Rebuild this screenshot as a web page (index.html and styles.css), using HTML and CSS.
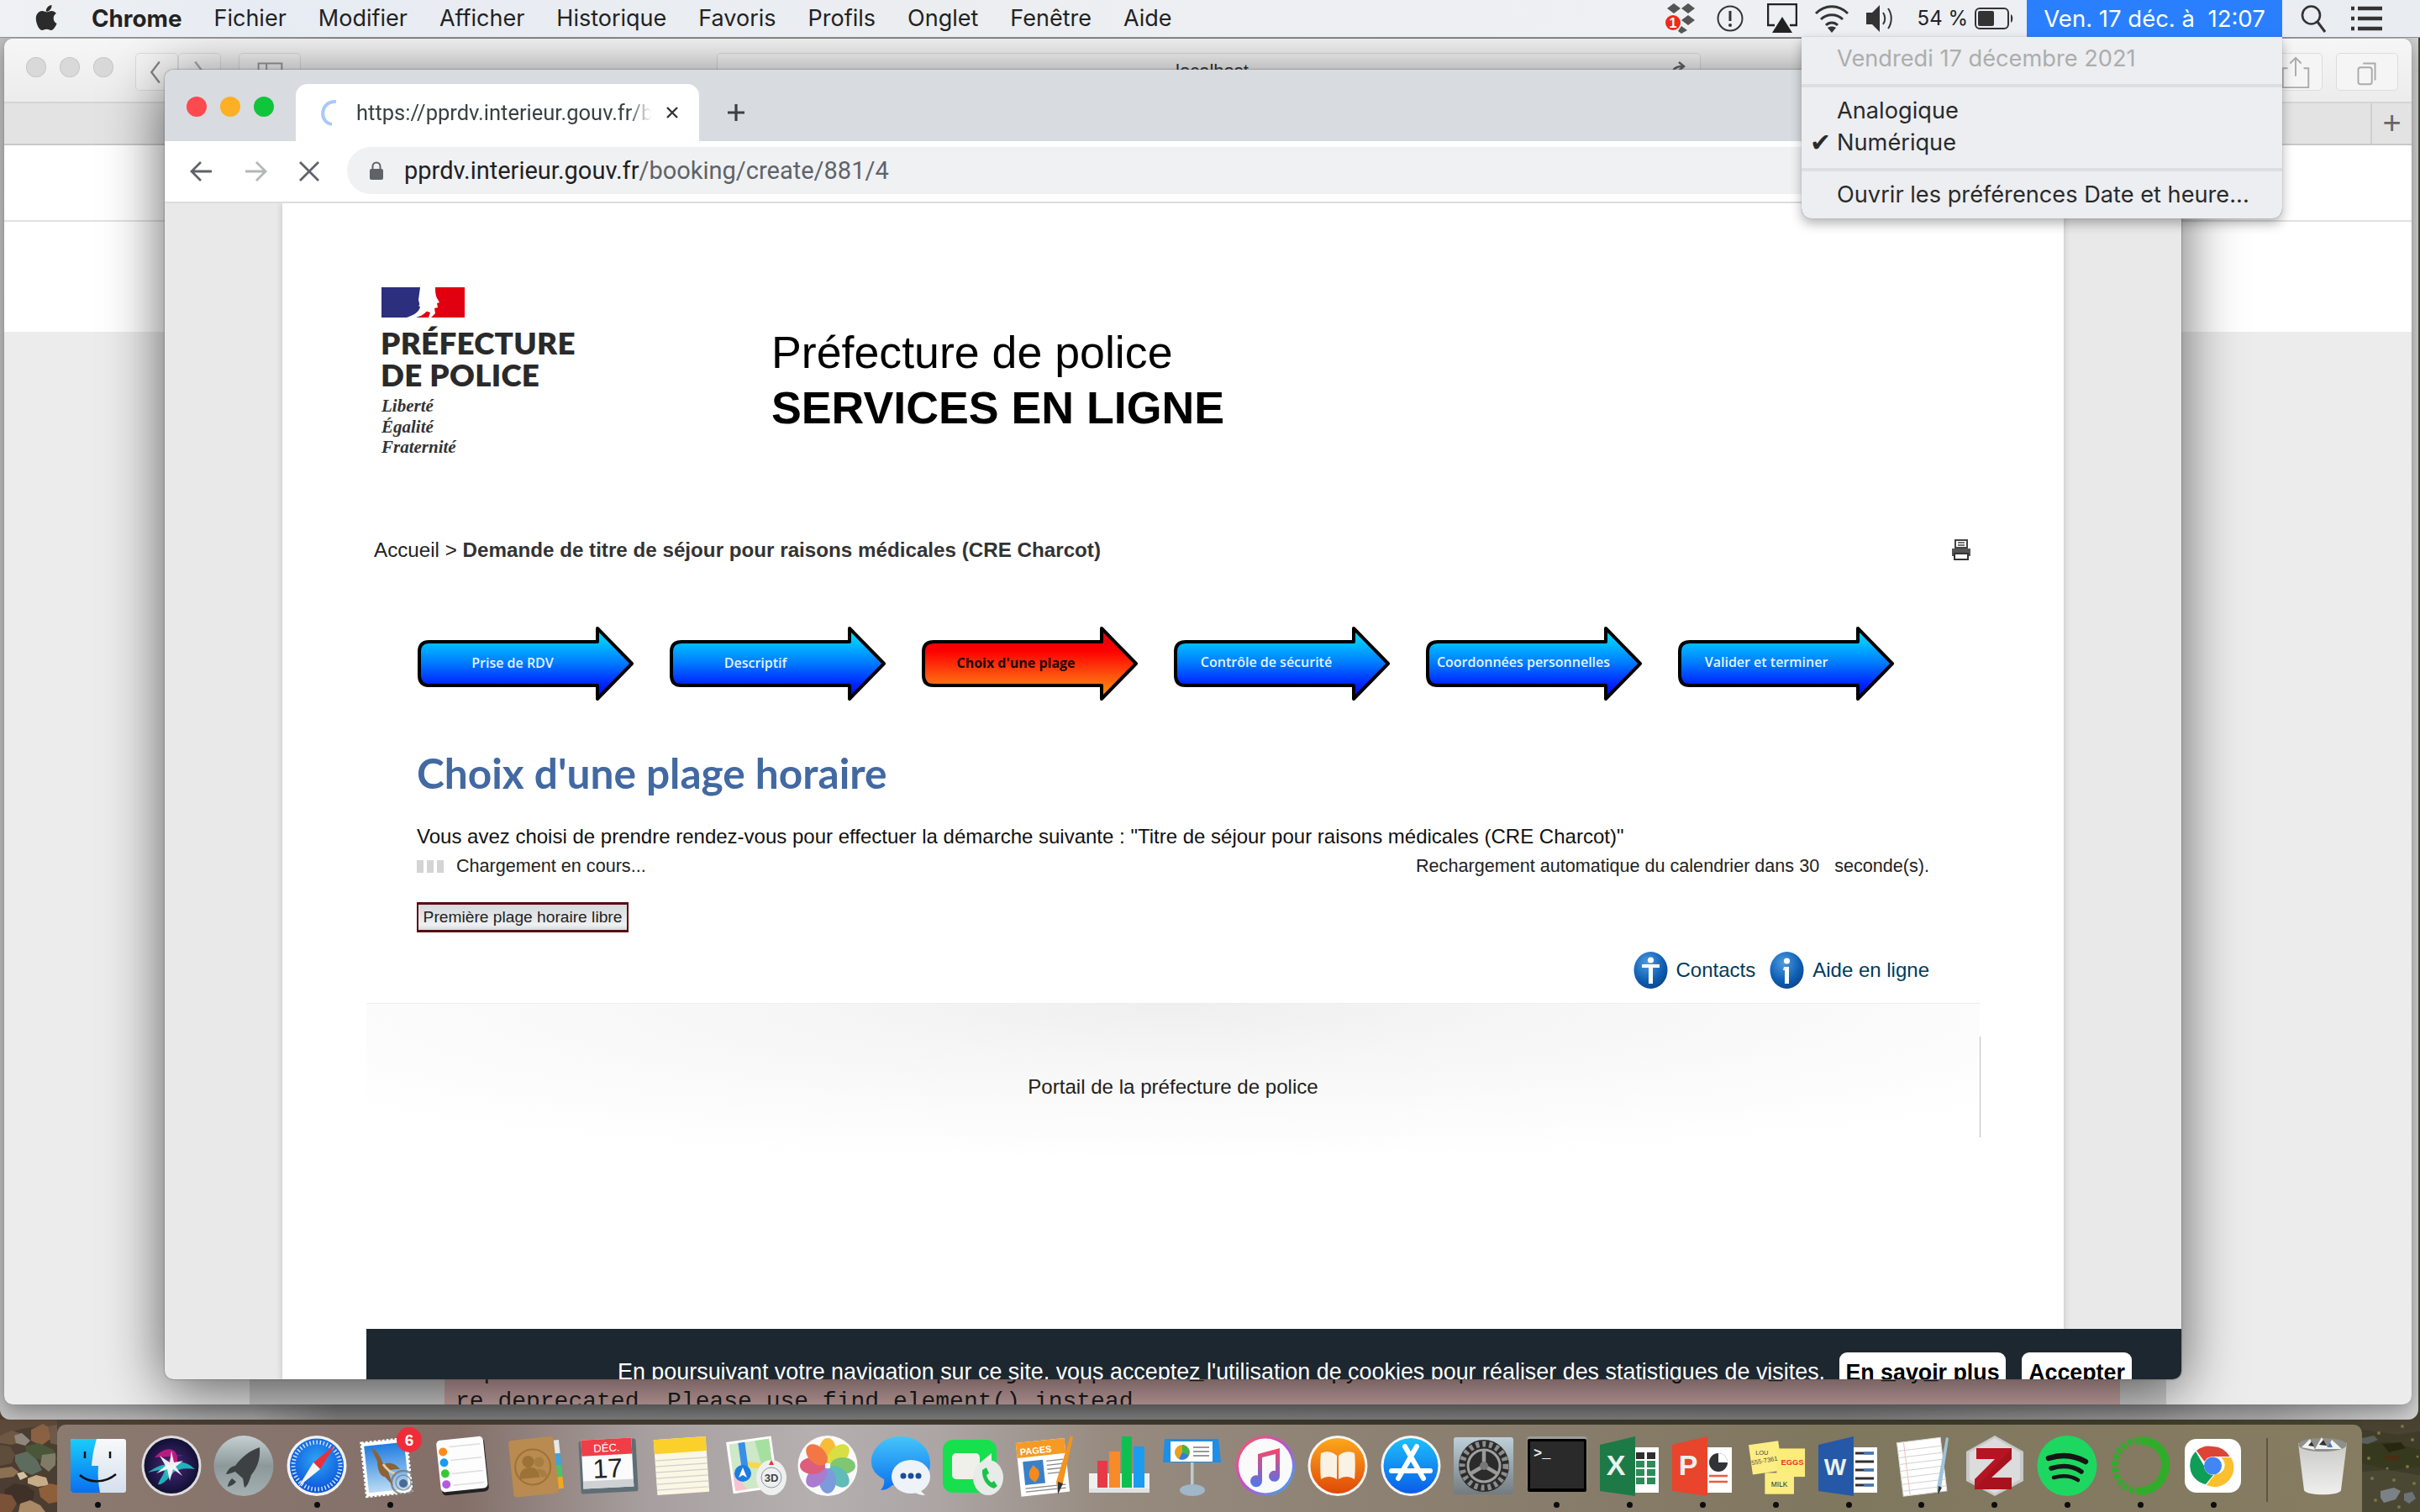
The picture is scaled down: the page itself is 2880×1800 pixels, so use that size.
FILE: index.html
```html
<!DOCTYPE html>
<html lang="fr">
<head>
<meta charset="utf-8">
<title>Préfecture de police</title>
<link rel="stylesheet" href="styles.css">
</head>
<body>
<div class="desktop">

<svg class="wall wall-left" viewBox="0 0 68 110" aria-hidden="true">
  <rect width="68" height="110" fill="#4b3d31"/>
  <path d="M0 0h68v12l-20-4-22 3-26 8z" fill="#5d4a3a"/>
  <path d="M0 19l14-6 12 4 3 9-16 4-13-2z" fill="#6e5844"/>
  <path d="M17 19l9-3 10 9-6 6-11-3z" fill="#8f877b"/>
  <path d="M37 12l14-7 7 4 2 14-11 8-12-6z" fill="#8a6243"/>
  <path d="M58 8l10-2v24l-8-2z" fill="#6e5a4a"/>
  <path d="M0 30l12 2 6 10-4 10-14 3z" fill="#5f4d3c"/>
  <path d="M30 32l16-4 18 8 4 12-14 2-12-4-10-2z" fill="#4a5638"/>
  <path d="M18 42l14-4 12 10 6 12-12 6-14-6-6-10z" fill="#5e6c5e"/>
  <path d="M50 42l16-2v14l-8 8-10-8z" fill="#7f7b67"/>
  <path d="M0 58l14-2 8 6-6 6-16 2z" fill="#8c7052"/>
  <path d="M33 70l10-4 12 3 3 9-13 2-12-4z" fill="#c6ac88"/>
  <path d="M5 84l12-8 14 2 10 8-2 10-10 6-20-2z" fill="#3f3128"/>
  <path d="M0 88l14 2 6 10-6 10H0z" fill="#7a5238"/>
  <path d="M46 82l14-6 8 2v20l-10 2-10-8z" fill="#8d5f3a"/>
  <path d="M24 100l12-4 12 6 6 8H22z" fill="#a88a66"/>
  <path d="M20 64l8-2 5 6-9 4z" fill="#d2c2a2"/>
</svg>
<svg class="wall wall-right" viewBox="0 0 69 110" aria-hidden="true">
  <rect width="69" height="110" fill="#3f3c2a"/>
  <path d="M0 0h69v14l-26 4-43-6z" fill="#4a4332"/>
  <path d="M0 30l30-4 39 10v20l-34 4-35-8z" fill="#37391f"/>
  <path d="M24 29l22-2 6 7-20 5z" fill="#25280f"/>
  <path d="M26 43l20 1-4 5-14-1z" fill="#4a2e12"/>
  <path d="M0 62l30-2 39 6v44H0z" fill="#4a4833"/>
  <path d="M22 85l16-4 8 4-6 10-14 4-4-6z" fill="#7c8187"/>
  <path d="M50 88l10-2 4 8-8 6-6-4z" fill="#6d7278"/>
  <path d="M0 22l14-3 5 5-12 5-7-1z" fill="#5b5f5a"/>
  <g fill="#7a7344"><circle cx="8" cy="46" r="2"/><circle cx="20" cy="16" r="2"/><circle cx="48" cy="8" r="2"/><circle cx="60" cy="24" r="2"/><circle cx="54" cy="56" r="2"/><circle cx="12" cy="70" r="2"/><circle cx="38" cy="72" r="2"/><circle cx="62" cy="76" r="2"/><circle cx="16" cy="96" r="2"/><circle cx="44" cy="104" r="2"/><circle cx="30" cy="58" r="1.500"/><circle cx="66" cy="44" r="1.500"/></g>
</svg>

<section class="back-window"></section>

<section class="safari">
  <div class="sf-toolbar">
    <div class="sf-lights"><i></i><i></i><i></i></div>
    <div class="sf-nav">
      <span class="sf-btn sf-w51"><svg viewBox="0 0 51 45" class="fill"><path d="M29 10 19 23l10 13" fill="none" stroke="#888" stroke-width="2.5"/></svg></span>
      <span class="sf-btn sf-w51"><svg viewBox="0 0 51 45" class="fill"><path d="M20 10l10 13-10 13" fill="none" stroke="#aaa" stroke-width="2.5"/></svg></span>
    </div>
    <span class="sf-btn sf-side"><svg viewBox="0 0 74 45" class="fill"><rect x="23" y="12" width="29" height="22" fill="none" stroke="#999" stroke-width="2"/><path d="M33 12v22" stroke="#999" stroke-width="2"/></svg></span>
    <div class="sf-url"><span>localhost</span><svg class="sf-reload" viewBox="0 0 24 24"><path d="M5 20c0-8 5-11 12-11M13 4l6 5-6 5" fill="none" stroke="#666" stroke-width="2.5"/></svg></div>
    <span class="sf-btn sf-share"><svg viewBox="0 0 64 45" class="fill"><path d="M22 18h-6v24h32V18h-6M32 28V5M25 12l7-7 7 7" fill="none" stroke="#aaa" stroke-width="2"/></svg></span>
    <span class="sf-btn sf-tabs"><svg viewBox="0 0 74 45" class="fill"><rect x="26" y="17" width="17" height="21" rx="3" fill="none" stroke="#aaa" stroke-width="2"/><path d="M32 12h15v21" fill="none" stroke="#aaa" stroke-width="2"/></svg></span>
  </div>
  <div class="sf-tabbar"><span class="sf-newtab">+</span></div>
  <div class="sf-page">
    <div class="sf-white"><div class="sf-white-top"></div></div>
  </div>
  <div class="sf-dim">
    <div class="sf-log">
      <div>/api/local/home/tests/autorendezv/pref/job/app/main/_rendezvo.py:12: DeprecationWarning: find_element_by_* commands a</div>
      <div>re deprecated. Please use find_element() instead</div>
    </div>
  </div>
</section>

<section class="chrome">
  <div class="tabstrip">
    <div class="lights"><i class="red"></i><i class="amber"></i><i class="green"></i></div>
    <div class="tab">
      <svg class="spinner" viewBox="0 0 30 34"><path d="M24 4C6 2 2 28 19 31" fill="none" stroke="#a9c8fb" stroke-width="4"/></svg>
      <span class="tab-title">https://pprdv.interieur.gouv.fr/b</span>
      <svg class="tab-x" viewBox="0 0 16 16"><path d="M2 2l12 12M14 2 2 14" stroke="#333" stroke-width="2.4"/></svg>
    </div>
    <svg class="tab-plus" viewBox="0 0 24 24"><path d="M12 2v20M2 12h20" stroke="#3c4043" stroke-width="3.2"/></svg>
  </div>
  <div class="toolbar">
    <svg class="tb-ic" viewBox="0 0 32 32"><path d="M28 16H5M15 5 4 16l11 11" fill="none" stroke="#5f6368" stroke-width="2.8"/></svg>
    <svg class="tb-ic" viewBox="0 0 32 32"><path d="M4 16h23M17 5l11 11-11 11" fill="none" stroke="#b4b6b9" stroke-width="2.8"/></svg>
    <svg class="tb-ic" viewBox="0 0 32 32"><path d="M5 5l22 22M27 5 5 27" fill="none" stroke="#5f6368" stroke-width="2.8"/></svg>
    <div class="omnibox">
      <svg class="lock" viewBox="0 0 16 22"><rect x="0" y="9" width="16" height="13" rx="2" fill="#5f6368"/><path d="M3.5 10V6a4.5 4.5 0 0 1 9 0v4" fill="none" stroke="#5f6368" stroke-width="2"/></svg>
      <span class="url"><b>pprdv.interieur.gouv.fr</b>/booking/create/881/4</span>
    </div>
  </div>
  <div class="viewport">
    <main class="page">
      <header class="site-header">
        <div class="logo">
          <svg class="flag" viewBox="0 0 99 36">
            <rect width="46" height="36" fill="#2b2f7e"/>
            <rect x="46" width="53" height="36" fill="#e1000f"/>
            <path d="M46 0h17c-4 5-5 9-3 12l3 5-3 1 1 5-4 1c-4 6-6 9-16 12H30c9-3 15-7 16-13l-2-8z" fill="#fff"/>
            <path d="M64 0h-8c-2 6-5 9-4 14l-8 8 4 2 5-3-1 7 6 2-2 6h3l5-5-1-6 4-1-1-5 3-1-3-5c-2-4-2-9-2-14z" fill="#fff"/>
          </svg>
          <div class="logo-name"><div>PRÉFECTURE</div><div>DE POLICE</div></div>
          <div class="logo-motto"><div>Liberté</div><div>Égalité</div><div>Fraternité</div></div>
        </div>
        <div class="site-title"><div>Préfecture de police</div><div class="strong">SERVICES EN LIGNE</div></div>
      </header>

      <div class="crumbs">
        <div>Accueil &gt; <b>Demande de titre de séjour pour raisons médicales (CRE Charcot)</b></div>
        <svg class="print" viewBox="0 0 24 25"><path d="M5 1h14v9H5z" fill="#fff" stroke="#444" stroke-width="2"/><path d="M8 4h8M8 7h8" stroke="#444" stroke-width="1.5"/><path d="M1 11h22v9H1z" fill="#555"/><path d="M4 17h16v7H4z" fill="#fff" stroke="#333" stroke-width="2"/></svg>
      </div>

      <ol class="steps">
        <li class="step"><svg viewBox="0 0 257 90">
          <defs>
            <linearGradient id="gb" x1="0" y1="0" x2="0" y2="1"><stop offset="0" stop-color="#00e0f0"/><stop offset=".22" stop-color="#00bcff"/><stop offset=".5" stop-color="#0078ff"/><stop offset=".78" stop-color="#0028ff"/><stop offset="1" stop-color="#0008d0"/></linearGradient>
            <linearGradient id="gr" x1="0" y1="0" x2="0" y2="1"><stop offset="0" stop-color="#d80010"/><stop offset=".32" stop-color="#ff0000"/><stop offset=".7" stop-color="#ff5a10"/><stop offset="1" stop-color="#ffa000"/></linearGradient>
            <path id="arrow" d="M14 19H214V3L255 45 214 87V71H14Q2 71 2 59V31Q2 19 14 19Z"/>
          </defs>
          <use href="#arrow" fill="url(#gb)" stroke="#000" stroke-width="4" stroke-linejoin="round"/>
          <text x="113" y="50" class="step-label">Prise de RDV</text></svg></li>
        <li class="step"><svg viewBox="0 0 257 90"><use href="#arrow" fill="url(#gb)" stroke="#000" stroke-width="4" stroke-linejoin="round"/><text x="102" y="50" class="step-label">Descriptif</text></svg></li>
        <li class="step"><svg viewBox="0 0 257 90"><use href="#arrow" fill="url(#gr)" stroke="#000" stroke-width="4" stroke-linejoin="round"/><text x="112" y="50" class="step-label dark">Choix d'une plage</text></svg></li>
        <li class="step"><svg viewBox="0 0 257 90"><use href="#arrow" fill="url(#gb)" stroke="#000" stroke-width="4" stroke-linejoin="round"/><text x="110" y="49" class="step-label">Contrôle de sécurité</text></svg></li>
        <li class="step"><svg viewBox="0 0 257 90"><use href="#arrow" fill="url(#gb)" stroke="#000" stroke-width="4" stroke-linejoin="round"/><text x="116" y="49" class="step-label">Coordonnées personnelles</text></svg></li>
        <li class="step"><svg viewBox="0 0 257 90"><use href="#arrow" fill="url(#gb)" stroke="#000" stroke-width="4" stroke-linejoin="round"/><text x="105" y="49" class="step-label">Valider et terminer</text></svg></li>
      </ol>

      <h2 class="heading">Choix d'une plage horaire</h2>
      <p class="intro">Vous avez choisi de prendre rendez-vous pour effectuer la démarche suivante : "Titre de séjour pour raisons médicales (CRE Charcot)"</p>
      <div class="status">
        <div class="loading"><span class="bars"><i></i><i></i><i></i></span>Chargement en cours...</div>
        <div class="reload">Rechargement automatique du calendrier dans 30&nbsp;&nbsp; seconde(s).</div>
      </div>
      <button class="first-slot" type="button">Première plage horaire libre</button>
      <div class="links">
        <a class="info"><svg viewBox="0 0 41 44"><defs><radialGradient id="gi" cx=".4" cy=".3" r=".8"><stop offset="0" stop-color="#4f9be0"/><stop offset=".6" stop-color="#0f5fb4"/><stop offset="1" stop-color="#0a3f80"/></radialGradient></defs><ellipse cx="20.5" cy="22" rx="20" ry="22" fill="url(#gi)"/><circle cx="20.5" cy="10" r="3.6" fill="#fff"/><path d="M10 15h21v4h-8v19h-5V19h-8z" fill="#fff"/></svg>Contacts</a>
        <a class="info"><svg viewBox="0 0 41 44"><ellipse cx="20.5" cy="22" rx="20" ry="22" fill="url(#gi)"/><circle cx="20.5" cy="11" r="3.6" fill="#fff"/><path d="M17 18h6v20h-5V22h-2z" fill="#fff"/></svg>Aide en ligne</a>
      </div>
      <footer class="site-footer"><div class="footer-inner">Portail de la préfecture de police</div></footer>
    </main>
    <div class="cookie">
      <span class="cookie-text">En poursuivant votre navigation sur ce site, vous acceptez l'utilisation de cookies pour réaliser des statistiques de visites.</span>
      <button class="cookie-btn more" type="button">En savoir plus</button>
      <button class="cookie-btn accept" type="button">Accepter</button>
    </div>
  </div>
</section>

<nav class="menubar">
  <div class="menu-left">
    <svg class="apple" viewBox="0 0 26 30"><path d="M19.5 0c.2 2.200-.6 4.100-1.800 5.500-1.300 1.500-3.100 2.400-4.900 2.300-.3-2 .7-4 1.800-5.300C15.800 1 17.800.1 19.500 0zM25.600 22c-.7 1.600-1 2.300-1.900 3.700-1.300 2-3 4.300-5.200 4.300-1.900 0-2.400-1.200-5-1.200s-3.200 1.200-5.100 1.200c-2.200 0-3.800-2.100-5-4C.900 20.800-.300 14.700 2 11c1.500-2.500 3.900-3.900 6.200-3.900 2.300 0 3.700 1.300 5.600 1.300 1.800 0 2.900-1.300 5.600-1.300 2 0 4.100 1.100 5.600 3-4.900 2.700-4.100 9.700.6 11.900z" fill="#2b2b2b"/></svg>
    <b>Chrome</b><span>Fichier</span><span>Modifier</span><span>Afficher</span><span>Historique</span><span>Favoris</span><span>Profils</span><span>Onglet</span><span>Fenêtre</span><span>Aide</span>
  </div>
  <div class="menu-right">
    <svg class="st dropbox" viewBox="0 0 37 36"><g fill="#555"><path d="M10 0l8 6-8 6-8-6zM27 0l8 6-8 6-8-6zM27 14l8 6-8 6-8-6zM19 27l7 5-7 4-4-3z"/></g><circle cx="9" cy="23" r="9" fill="#ee2a1b"/><text x="9" y="29" class="st-badge">1</text></svg>
    <svg class="st alert" viewBox="0 0 32 32"><circle cx="16" cy="16" r="14.500" fill="none" stroke="#333" stroke-width="2"/><path d="M16 7v12" stroke="#333" stroke-width="3"/><circle cx="16" cy="24" r="2" fill="#333"/></svg>
    <svg class="st airplay" viewBox="0 0 36 36"><path d="M9 26H1V1h34v25h-8" fill="none" stroke="#222" stroke-width="2.500"/><path d="M18 16l12 19H6z" fill="#222"/></svg>
    <svg class="st wifi" viewBox="0 0 42 36"><path d="M2 12c11-11 27-11 38 0M8 19c7-7 19-7 26 0M14 26c4-4 10-4 14 0" fill="none" stroke="#333" stroke-width="3"/><path d="M21 35l-5-6c3-2 7-2 10 0z" fill="#333"/></svg>
    <svg class="st vol" viewBox="0 0 33 34"><path d="M0 10h7l9-9v32l-9-9H0z" fill="#333"/><path d="M20 10c3 4 3 10 0 14M26 5c5 7 5 17 0 24" fill="none" stroke="#333" stroke-width="2"/></svg>
    <span class="pct">54 %</span>
    <svg class="st batt" viewBox="0 0 47 26"><rect x="1" y="1" width="39" height="24" rx="5" fill="none" stroke="#333" stroke-width="2"/><rect x="4" y="4" width="19" height="18" rx="2" fill="#333"/><path d="M43 8c3 1 3 9 0 10z" fill="#333"/></svg>
    <span class="clock">Ven. 17 déc. à&nbsp; 12:07</span>
    <svg class="st search" viewBox="0 0 30 34"><circle cx="12.500" cy="13" r="10.500" fill="none" stroke="#333" stroke-width="2.600"/><path d="M20 21l9 12" stroke="#333" stroke-width="3"/></svg>
    <svg class="st list" viewBox="0 0 37 30"><path d="M0 3h4M8 3h29M0 15h4M8 15h29M0 27h4M8 27h29" stroke="#333" stroke-width="4.500"/></svg>
  </div>
</nav>

<div class="popup">
  <div class="pop-row muted">Vendredi 17 décembre 2021</div>
  <div class="pop-sep"></div>
  <div class="pop-row">Analogique</div>
  <div class="pop-row"><span class="check">✔</span>Numérique</div>
  <div class="pop-sep"></div>
  <div class="pop-row">Ouvrir les préférences Date et heure...</div>
</div>

<div class="dock">
  <div class="slot on"><svg viewBox="0 0 72 72"><defs><linearGradient id="fa" x1="0" y1="0" x2="0" y2="1"><stop offset="0" stop-color="#19cdfb"/><stop offset="1" stop-color="#0a6ff0"/></linearGradient><linearGradient id="fb" x1="0" y1="0" x2="0" y2="1"><stop offset="0" stop-color="#f8f9fa"/><stop offset="1" stop-color="#d4e0ee"/></linearGradient></defs><rect x="3" y="4" width="66" height="64" rx="3" fill="url(#fb)"/><path d="M6 4h28c-3 10-5 19-6 32h8c-1 11 0 21 2 32H6a3 3 0 0 1-3-3V7a3 3 0 0 1 3-3z" fill="url(#fa)"/><path d="M20 19v8M50 19v8" stroke="#111" stroke-width="2.500"/><path d="M14 47c11 10 30 10 43-1" fill="none" stroke="#111" stroke-width="2.500"/></svg></div>
  <div class="slot"><svg viewBox="0 0 72 72"><defs><radialGradient id="sg" cx=".5" cy=".5" r=".6"><stop offset="0" stop-color="#4a2a7a"/><stop offset=".7" stop-color="#1a1440"/><stop offset="1" stop-color="#0b0a24"/></radialGradient></defs><ellipse cx="36" cy="36" rx="35.500" ry="36" fill="#ddd"/><ellipse cx="36" cy="36" rx="32.500" ry="33" fill="url(#sg)"/><path d="M16 26c14-16 32-12 26 10-5 18-18 16-12 0 3-9 8-14 20-12" fill="#d01a8a" opacity=".85"/><path d="M8 44c16-12 26-10 28-8 8-6 18-6 28 4-12-2-20 0-26 4-6 8-14 16-18 14 2-6 6-10 8-16-6-2-12 0-20 2z" fill="#1fd6d0" opacity=".8"/><path d="M36 18l3 14 11-2-9 7 8 11-11-8-4 14-3-14-13 5 11-9-7-12 12 8z" fill="#fff" opacity=".9"/></svg></div>
  <div class="slot"><svg viewBox="0 0 72 72"><defs><linearGradient id="lp" x1="0" y1="0" x2="0" y2="1"><stop offset="0" stop-color="#c5d0d3"/><stop offset=".5" stop-color="#8d989b"/><stop offset="1" stop-color="#a5b0b3"/></linearGradient></defs><ellipse cx="36" cy="36" rx="35.500" ry="36" fill="url(#lp)"/><path d="M55 14c1 13-2 23-10 33-2 6-4 13-8 15-1-3-1-7-2-11l-9-8c-4 1-8 3-11 3 2-5 5-9 11-10 7-10 17-18 29-22z" fill="#3e4143"/><path d="M22 51c-3 3-5 7-5 10 4-1 8-3 10-6z" fill="#3e4143"/></svg></div>
  <div class="slot on"><svg viewBox="0 0 72 72"><defs><radialGradient id="sf" cx=".5" cy=".4" r=".6"><stop offset="0" stop-color="#2ea5f5"/><stop offset="1" stop-color="#0b4fd8"/></radialGradient></defs><ellipse cx="36" cy="36" rx="35.500" ry="36" fill="#f2f2f2"/><ellipse cx="36" cy="36" rx="32" ry="32.500" fill="url(#sf)"/><circle cx="36" cy="36" r="28" fill="none" stroke="#cfe6ff" stroke-width="5" stroke-dasharray="1.500 2.600"/><path d="M58 11 32 32l8 8z" fill="#e8303a"/><path d="M14 61 32 32l8 8z" fill="#f5f5f5"/></svg></div>
  <div class="slot on"><svg viewBox="0 0 72 72"><rect x="5" y="6" width="54" height="64" fill="#fff" stroke="#fff" stroke-width="3" stroke-dasharray="3 2" transform="rotate(-6 32 38)"/><defs><linearGradient id="ml" x1="0" y1="0" x2="0" y2="1"><stop offset="0" stop-color="#1f7ce0"/><stop offset="1" stop-color="#bcdcf5"/></linearGradient></defs><rect x="8" y="10" width="48" height="56" fill="url(#ml)" transform="rotate(-6 32 38)"/><path d="M14 15c7 3 11 10 14 19 7-3 15-1 20 6-6 0-10 0-14 3l6 17-10-11c-5 0-9-8-9-18-2-5-5-10-7-16z" fill="#8d6236"/><path d="M28 34c4 6 8 10 14 11" stroke="#e0cfa8" stroke-width="3" fill="none"/><circle cx="52" cy="56" r="14" fill="none" stroke="#777" stroke-width="2.500" opacity=".8"/><circle cx="52" cy="56" r="9" fill="none" stroke="#777" stroke-width="1.500" opacity=".7"/><circle cx="52" cy="57" r="5" fill="#4a6c92"/><circle cx="59" cy="5" r="15" fill="#f02c38"/><text x="59" y="12" class="badge-num">6</text></svg></div>
  <div class="slot"><svg viewBox="0 0 72 72"><g transform="rotate(-6 36 36)"><rect x="8" y="5" width="56" height="64" rx="5" fill="#222"/><rect x="7" y="3" width="56" height="62" rx="5" fill="#fdfdfd"/><path d="M22 12h37M22 28h37M22 44h37M22 58h37" stroke="#ddd" stroke-width="1.500"/><circle cx="14" cy="17" r="5" fill="#fb8c1b"/><circle cx="14" cy="30" r="5" fill="#1b9cf2"/><circle cx="14" cy="43" r="5" fill="#37c935"/><circle cx="14" cy="56" r="5" fill="#b65be0"/></g></svg></div>
  <div class="slot"><svg viewBox="0 0 72 72"><g transform="rotate(-6 36 36)"><rect x="56" y="8" width="10" height="16" fill="#e8e8e8"/><rect x="56" y="24" width="10" height="14" fill="#3aa5e0"/><rect x="56" y="38" width="10" height="14" fill="#47c46a"/><rect x="56" y="52" width="10" height="14" fill="#f0a820"/><rect x="6" y="3" width="54" height="68" rx="4" fill="#b98b50"/><circle cx="32" cy="37" r="21" fill="none" stroke="#9c7238" stroke-width="2"/><circle cx="27" cy="30" r="7" fill="#9c7238"/><path d="M15 50c0-9 5-13 12-13s12 4 12 13z" fill="#9c7238"/><circle cx="40" cy="32" r="6" fill="#a87d42"/><path d="M37 40c6 0 11 3 11 10h-7z" fill="#a87d42"/></g></svg></div>
  <div class="slot"><svg viewBox="0 0 72 72"><g transform="rotate(-3 36 36)"><rect x="2" y="5" width="68" height="63" rx="3" fill="#5f6e75"/><rect x="5" y="4" width="60" height="58" fill="#fbfbfb"/><rect x="5" y="4" width="60" height="19" fill="#ef3e46"/><rect x="5" y="53" width="60" height="9" fill="#cfd2d4"/><text x="35" y="19" class="cal-m">DÉC.</text><text x="35" y="50" class="cal-d">17</text></g></svg></div>
  <div class="slot"><svg viewBox="0 0 72 72"><g transform="rotate(-4 36 36)"><rect x="5" y="3" width="62" height="66" fill="#fbf7e4"/><rect x="5" y="3" width="62" height="17" fill="#fbd02a"/><path d="M5 28h62M5 35h62M5 42h62M5 49h62M5 56h62M5 63h62" stroke="#cfcfcf" stroke-width="1.200"/></g></svg></div>
  <div class="slot"><svg viewBox="0 0 72 72"><g transform="rotate(-8 32 34)"><rect x="6" y="4" width="54" height="62" fill="#fff"/><rect x="9" y="7" width="48" height="56" fill="#cfe8c8"/><path d="M40 7h17v30H44z" fill="#a6e0a0"/><path d="M9 40l14 23H9z" fill="#f7c3d1"/><path d="M26 30l31 8v6L30 38z" fill="#f6d84f"/><path d="M20 7h8v42h-8z" fill="#3a8ee8"/></g><circle cx="22" cy="45" r="10" fill="#1c7ce0"/><path d="M22 38l5 12-5-3-5 3z" fill="#fff"/><ellipse cx="56" cy="50" rx="18" ry="21" fill="#eef0f0"/><circle cx="56" cy="50" r="12" fill="none" stroke="#8a9aa0" stroke-width="1"/><text x="56" y="55" class="map-3d">3D</text><path d="M56 29l-3 6h6z" fill="#e33"/></svg></div>
  <div class="slot"><svg viewBox="0 0 72 72"><ellipse cx="36" cy="36" rx="35.500" ry="36" fill="#fafafa"/><g opacity=".88"><ellipse cx="36" cy="18" rx="10" ry="15" fill="#f8b51e"/><ellipse cx="49" cy="23" rx="10" ry="15" fill="#d4dc2b" transform="rotate(45 49 23)"/><ellipse cx="54" cy="36" rx="15" ry="10" fill="#6fc05f"/><ellipse cx="49" cy="49" rx="10" ry="15" fill="#4cb3b0" transform="rotate(-45 49 49)"/><ellipse cx="36" cy="54" rx="10" ry="15" fill="#6b8ed8"/><ellipse cx="23" cy="49" rx="10" ry="15" fill="#a06bc8" transform="rotate(45 23 49)"/><ellipse cx="18" cy="36" rx="15" ry="10" fill="#d8486e"/><ellipse cx="23" cy="23" rx="10" ry="15" fill="#f2652b" transform="rotate(-45 23 23)"/></g></svg></div>
  <div class="slot"><svg viewBox="0 0 72 72"><defs><linearGradient id="msg" x1="0" y1="0" x2="0" y2="1"><stop offset="0" stop-color="#45c5fa"/><stop offset="1" stop-color="#0a70ef"/></linearGradient></defs><path d="M36 1c20 0 35 14 35 32 0 11-6 19-16 26H26c-3 3-8 6-14 6 3-3 5-8 4-13C7 47 1 41 1 31 1 14 17 1 36 1z" fill="url(#msg)"/><ellipse cx="48" cy="49" rx="23" ry="20" fill="#eef3f8"/><path d="M58 64l7 7c-5 0-9-1-13-4z" fill="#eef3f8"/><circle cx="39" cy="48" r="3.500" fill="#1a4d9a"/><circle cx="48" cy="48" r="3.500" fill="#1a4d9a"/><circle cx="57" cy="48" r="3.500" fill="#1a4d9a"/></svg></div>
  <div class="slot"><svg viewBox="0 0 72 72"><rect x="0" y="5" width="64" height="63" rx="12" fill="#16e04e"/><rect x="11" y="21" width="33" height="31" rx="5" fill="#f0f0ea"/><path d="M46 31l12-10v31L46 42z" fill="#f0f0ea"/><ellipse cx="54" cy="50" rx="18" ry="21" fill="#e8ece8"/><path d="M47 41l5-3 3 7-3 2c1 4 3 7 6 9l3-2 4 6-4 3c-9-2-15-13-14-22z" fill="#1bc24a"/></svg></div>
  <div class="slot"><svg viewBox="0 0 72 72"><g transform="rotate(-6 30 38)"><rect x="3" y="6" width="58" height="64" fill="#fff"/><path d="M3 6h58v18H3z" fill="#f79a24"/><text x="7" y="21" class="pages-t">PAGES</text><rect x="9" y="29" width="24" height="28" fill="#3a80c8"/><path d="M21 34c3 5 7 5 6 12-1 4-3 6-6 9-3-3-6-5-6-9 0-7 3-7 6-12z" fill="#f28a1e"/><path d="M37 31h20M37 36h20M37 41h20M37 46h20M9 61h48M9 65h48" stroke="#888" stroke-width="1.300"/></g><path d="M65 0l3 2-12 54-6 14-2-15z" fill="#f2941e"/><path d="M50 55l6 2-6 13z" fill="#333"/></svg></div>
  <div class="slot"><svg viewBox="0 0 72 72"><path d="M0 62h72v6H0z" fill="#dfe3e3"/><path d="M0 45h72v18H0z" fill="#eef0f0"/><rect x="10" y="30" width="12" height="32" fill="#e73a48"/><rect x="24" y="19" width="13" height="43" fill="#f68b28"/><rect x="39" y="1" width="12" height="61" fill="#0ec04f"/><rect x="53" y="13" width="13" height="49" fill="#1a9cf0"/></svg></div>
  <div class="slot"><svg viewBox="0 0 72 72"><path d="M3 4h64l3 28H1z" fill="#1e8ee6"/><rect x="10" y="8" width="50" height="24" fill="#fff" transform="translate(0 -1)"/><circle cx="24" cy="20" r="9" fill="#e8a020"/><path d="M24 20V11a9 9 0 0 1 8 12z" fill="#3fb54a"/><path d="M24 20l8 3a9 9 0 0 1-12 5z" fill="#2d7fe0"/><path d="M37 14h19M37 19h19M37 24h19" stroke="#999" stroke-width="2"/><rect x="34" y="32" width="3.500" height="28" fill="#c0cbd2"/><ellipse cx="36" cy="65" rx="15" ry="7" fill="#9fb7c8"/></svg></div>
  <div class="slot"><svg viewBox="0 0 72 72"><defs><linearGradient id="it" x1="0" y1="0" x2="1" y2="1"><stop offset="0" stop-color="#fb5a5a"/><stop offset=".5" stop-color="#c04fd0"/><stop offset="1" stop-color="#25b7f0"/></linearGradient><linearGradient id="itn" x1="0" y1="0" x2="0" y2="1"><stop offset="0" stop-color="#fb4468"/><stop offset="1" stop-color="#4c76f0"/></linearGradient></defs><ellipse cx="36" cy="36" rx="35.500" ry="36" fill="url(#it)"/><ellipse cx="36" cy="36" rx="32" ry="32.500" fill="#fafafa"/><path d="M27 22l26-7v33a6.500 6.500 0 1 1-5-6V22l-16 4v28a7 7 0 1 1-5-6.500z" fill="url(#itn)"/></svg></div>
  <div class="slot"><svg viewBox="0 0 72 72"><defs><linearGradient id="ib" x1="0" y1="0" x2="0" y2="1"><stop offset="0" stop-color="#fca81c"/><stop offset="1" stop-color="#e04807"/></linearGradient></defs><ellipse cx="36" cy="36" rx="35.500" ry="36" fill="#f5f5f5"/><ellipse cx="36" cy="36" rx="32.500" ry="33" fill="url(#ib)"/><path d="M35 24c-5-5-13-6-19-3-1 8-1 20 0 31 6-4 13-4 19 0zM37 24c5-5 13-6 19-3 1 8 1 20 0 31-6-4-13-4-19 0z" fill="#fbf2e6"/></svg></div>
  <div class="slot"><svg viewBox="0 0 72 72"><defs><linearGradient id="as" x1="0" y1="0" x2="0" y2="1"><stop offset="0" stop-color="#1cc0fa"/><stop offset="1" stop-color="#0a5ce8"/></linearGradient></defs><ellipse cx="36" cy="36" rx="35.500" ry="36" fill="#f5f5f5"/><ellipse cx="36" cy="36" rx="32.500" ry="33" fill="url(#as)"/><g stroke="#fff" stroke-width="6" stroke-linecap="round" fill="none"><path d="M43 13 21 51M29 13l22 38M13 42h46"/></g></svg></div>
  <div class="slot"><svg viewBox="0 0 72 72"><defs><linearGradient id="sp" x1="0" y1="0" x2="0" y2="1"><stop offset="0" stop-color="#bdd0da"/><stop offset="1" stop-color="#737b80"/></linearGradient></defs><rect x="0" y="2" width="71" height="68" rx="3" fill="url(#sp)"/><ellipse cx="36" cy="36" rx="30" ry="31" fill="#2b2b2b"/><circle cx="36" cy="36" r="26" fill="none" stroke="#8d8d8d" stroke-width="7" stroke-dasharray="4 4"/><circle cx="36" cy="36" r="19" fill="none" stroke="#a0a0a0" stroke-width="3"/><path d="M36 36V17M36 36 19 46M36 36l17 10" stroke="#9a9a9a" stroke-width="4.500"/><circle cx="36" cy="36" r="5" fill="#777"/></svg></div>
  <div class="slot on"><svg viewBox="0 0 72 72"><rect x="0.500" y="1" width="71" height="62" rx="3" fill="#9a9c9c"/><rect x="1" y="4" width="70" height="63" rx="2" fill="#000"/><rect x="4" y="7" width="64" height="56" fill="#2a2a2a"/><text x="8" y="26" class="term">&gt;_</text></svg></div>
  <div class="slot on"><svg viewBox="0 0 72 72"><rect x="37" y="14" width="33" height="54" fill="#fff"/><path d="M43 20h10v8H43zM56 20h10v8H56z" fill="#2f2f2f"/><path d="M43 30h10v8H43zM56 30h10v8H56zM43 40h10v8H43zM56 40h10v8H56zM43 50h10v8H43zM56 50h10v8H56z" fill="#2f8a5a"/><path d="M0 11 42 1v71L0 66z" fill="#1d7a46"/><text x="19" y="47" class="office">X</text></svg></div>
  <div class="slot on"><svg viewBox="0 0 72 72"><rect x="37" y="14" width="34" height="54" fill="#fff"/><circle cx="55" cy="32" r="11" fill="#303338"/><path d="M55 32V21a11 11 0 0 1 11 11z" fill="#fff"/><path d="M44 48h22M44 55h22" stroke="#ef5a3c" stroke-width="2.500"/><path d="M0 11 42 1v71L0 66z" fill="#e8452c"/><text x="19" y="47" class="office">P</text></svg></div>
  <div class="slot on"><svg viewBox="0 0 77 72"><g transform="rotate(-8 30 20)"><rect x="6" y="6" width="38" height="38" fill="#fcee82"/></g><rect x="40" y="14" width="36" height="36" fill="#fcec7a"/><text x="60" y="35" class="st-red">EGGS</text><rect x="25" y="44" width="37" height="27" fill="#fced80" transform="translate(0 1)"/><text x="33" y="63" class="st-blue">MILK</text><text x="13" y="22" class="st-note">LOU</text><text x="8" y="33" class="st-note" transform="rotate(-10 20 33)">555-7361</text></svg></div>
  <div class="slot on"><svg viewBox="0 0 72 72"><rect x="37" y="14" width="33" height="54" fill="#fff"/><path d="M44 21h22M44 31h22M44 41h22M44 51h22M44 59h22" stroke="#2f2f2f" stroke-width="3"/><path d="M54 21h12M54 41h12M54 59h12" stroke="#3f78c0" stroke-width="3"/><path d="M0 11 42 1v71L0 66z" fill="#2658a8"/><text x="20" y="47" class="office small">W</text></svg></div>
  <div class="slot on"><svg viewBox="0 0 72 72"><g transform="rotate(-7 30 36)"><rect x="10" y="6" width="52" height="64" fill="#fff" stroke="#ddd"/><path d="M10 16h52M10 24h52M10 32h52M10 40h52M10 48h52M10 56h52M10 64h52" stroke="#d0d0d0"/><path d="M18 6v64" stroke="#f2bcbc"/></g><path d="M65 2l3 1-9 60-4 8-1-9z" fill="#9fc4dc"/><path d="M56 60l4 2-5 9z" fill="#333"/></svg></div>
  <div class="slot on"><svg viewBox="0 0 72 72"><path d="M36 0l34 19v35L36 72 2 54V19z" fill="#c9c9c9"/><path d="M36 3 66 20v32L36 69 6 52V20z" fill="#dcdcdc"/><path d="M14 15h42v13L32 50h24v14H12V52l24-24H14z" fill="#b51522"/><path d="M56 15v13L32 50h24v14H12z" fill="#8d0f18" opacity=".35"/></svg></div>
  <div class="slot on"><svg viewBox="0 0 72 72"><ellipse cx="36" cy="36" rx="35.500" ry="36" fill="#1ed760"/><g fill="none" stroke="#151515" stroke-linecap="round"><path d="M14 27c15-5 30-4 44 4" stroke-width="6.500"/><path d="M17 39c13-4 26-3 36 4" stroke-width="5.500"/><path d="M20 50c11-3 21-2 29 3" stroke-width="4.500"/></g></svg></div>
  <div class="slot on"><svg viewBox="0 0 72 72"><path d="M36 6C54 6 67 19 66 36S53 66 36 66" fill="none" stroke="#2fad2a" stroke-width="10"/><path d="M36 66C18 66 6 53 6 36S18 6 36 6" fill="none" stroke="#2fad2a" stroke-width="8" stroke-dasharray="5 3"/></svg></div>
  <div class="slot on"><svg viewBox="0 0 72 72"><rect x="2" y="4" width="67" height="64" rx="14" fill="#fff"/><path d="M35.500 13a23 23 0 0 1 20 12H35.500a11 11 0 0 0-10 6L16 18a23 23 0 0 1 19.500-5z" fill="#db4437"/><path d="M15 19l10 17a11 11 0 0 0 11 11L27 58a23 23 0 0 1-12-39z" fill="#0f9d58"/><path d="M57 26a23 23 0 0 1-29 33l10-13a11 11 0 0 0 7-20z" fill="#fbc02d"/><circle cx="35.500" cy="36" r="10.500" fill="#4285f4"/></svg></div>
  <div class="dock-sep"></div>
  <div class="slot"><svg viewBox="0 0 72 72"><defs><linearGradient id="tr" x1="0" y1="0" x2="0" y2="1"><stop offset="0" stop-color="#c9c9c6"/><stop offset="1" stop-color="#f0f0ee"/></linearGradient></defs><path d="M8 9h58l-7 56c-1 7-42 7-44 0z" fill="url(#tr)"/><ellipse cx="37" cy="11" rx="29" ry="8" fill="#8f8f8c"/><path d="M12 14l10-10 6 13zM28 16l8-14 8 14zM42 16l6-11 12 11z" fill="#f2f2f0"/><path d="M33 11l5-6 4 7zM20 12l4-5 3 6z" fill="#333"/><path d="M43 14l3-6 3 6z" fill="#3b76c4"/></svg></div>
</div>

</div>
</body>
</html>
```

FILE: styles.css
```css
* { box-sizing: border-box; }
html, body { margin: 0; padding: 0; }
body { font-family: "Liberation Sans", Arial, sans-serif; color: #111; }

.desktop {
  position: relative; width: 2880px; height: 1800px; overflow: hidden;
  background: linear-gradient(90deg, #4f4034 0, #4f4438 10%, #3f3c30 60%, #45432f 100%);
}
.wall { position: absolute; top: 1690px; height: 110px; display: block; }
.wall-left { left: 0; width: 68px; }
.wall-right { left: 2811px; width: 69px; }

/* Back windows */
.back-window {
  position: absolute; left: 0; top: 40px; width: 2878px; height: 1650px;
  border-radius: 0 0 12px 12px;
  background: linear-gradient(90deg, #c2c2c2 0, #b0b0b0 300px, #8a8a8a 402px, #888 2200px, #a9a9a9 2700px, #d2d2d2 2878px);
}
.safari {
  position: absolute; left: 5px; top: 46px; width: 2865px; height: 1626px;
  border-radius: 10px; overflow: hidden; background: #ececec;
  box-shadow: 0 0 1px #666, 0 6px 24px rgba(0,0,0,.35);
}
.sf-toolbar { position: relative; height: 77px; background: linear-gradient(#f6f6f6, #ececec); border-bottom: 2px solid #d4d4d4; display: flex; align-items: flex-start; padding-top: 17px; }
.sf-lights { display: flex; gap: 16px; margin: 5px 0 0 26px; }
.sf-lights i { width: 24px; height: 24px; border-radius: 50%; background: #d9d9d9; box-shadow: inset 0 0 0 1px #c8c8c8; }
.sf-nav { display: flex; margin-left: 26px; gap: 0; }
.sf-btn { display: block; height: 45px; flex: none; border: 1px solid #dcdcdc; border-radius: 5px; background: #f5f5f5; }
.sf-w51 { width: 51px; }
.sf-side { width: 74px; margin-left: 21px; }
.sf-url { position: relative; flex: none; width: 1171px; height: 45px; margin-left: 495px; padding-left: 8px; border: 1px solid #dcdcdc; border-radius: 5px; background: #f7f7f7; text-align: center; font-size: 22px; line-height: 42px; color: #333; }
.sf-reload { position: absolute; right: 14px; top: 6px; width: 24px; height: 24px; }
.sf-share { width: 64px; margin-left: 676px; }
.sf-tabs { width: 74px; margin-left: 16px; }
.fill { display: block; width: 100%; height: 100%; }
.sf-tabbar { height: 50px; background: #e3e3e3; border-bottom: 2px solid #c8c8c8; display: flex; justify-content: flex-end; }
.sf-newtab { width: 49px; border-left: 2px solid #cfcfcf; text-align: center; font-size: 38px; line-height: 46px; color: #666; }
.sf-white { height: 222px; background: #fff; }
.sf-white-top { height: 91px; border-bottom: 2px solid #e2e2e2; }
.sf-dim { position: absolute; left: 292px; bottom: 0; width: 2281px; height: 40px; background: #cdcdcd; }
.sf-log {
  position: absolute; left: 232px; top: -16px; width: 1994px; height: 70px; padding-left: 13px;
  font: 28px/35px "Liberation Mono", "Courier New", monospace; color: #1d1d1d;
  background: #c9a5a5;
}
.sf-log div { white-space: pre; }

/* Chrome window */
.chrome {
  position: absolute; left: 196px; top: 83px; width: 2400px; height: 1559px;
  border-radius: 10px; overflow: hidden; background: #e9e9e9; display: flex; flex-direction: column;
  box-shadow: 0 0 2px #555, 0 12px 70px rgba(0,0,0,.62);
}
.tabstrip { height: 85px; flex: none; background: #d8dbe0; display: flex; align-items: flex-end; position: relative; }
.lights { display: flex; gap: 16px; position: absolute; left: 26px; top: 32px; }
.lights i { width: 24px; height: 24px; border-radius: 50%; }
.red { background: #fc4a4e; } .amber { background: #fdb024; } .green { background: #11c53a; }
.tab { margin-left: 156px; width: 480px; height: 68px; background: #fff; border-radius: 14px 14px 0 0; display: flex; align-items: center; padding: 0 24px 0 24px; position: relative; }
.spinner { width: 30px; height: 34px; flex: none; margin-right: 18px; }
.tab-title { flex: none; width: 351px; overflow: hidden; white-space: nowrap; font: 25.500px/34px Roboto, sans-serif; color: #3c4043; -webkit-mask-image: linear-gradient(90deg, #000 92%, transparent); mask-image: linear-gradient(90deg, #000 92%, transparent); }
.tab-x { width: 16px; height: 16px; flex: none; margin-left: 17px; }
.tab-plus { width: 24px; height: 24px; margin: 0 0 22px 32px; }
.toolbar { height: 74px; flex: none; background: #fff; border-bottom: 2px solid #dcdcdc; display: flex; align-items: center; padding-left: 28px; gap: 32px; }
.tb-ic { width: 32px; height: 32px; flex: none; }
.omnibox { margin-left: -3px; width: 2150px; height: 56px; background: #f0f1f3; border-radius: 28px; display: flex; align-items: center; padding-left: 27px; margin-bottom: 2px; }
.lock { width: 16px; height: 22px; flex: none; margin-right: 25px; }
.url { font: 29px/40px Roboto, sans-serif; color: #5f6368; }
.url b { font-weight: 400; color: #202124; }

.viewport { position: relative; flex: 1; min-height: 0; display: flex; justify-content: center; overflow: hidden; }
.page { width: 2120px; height: 100%; background: #fff; padding: 0 100px; box-shadow: 0 0 8px rgba(0,0,0,.18); }

.site-header { height: 392px; padding: 100px 0 0 18px; display: flex; }
.logo { width: 464px; flex: none; }
.flag { display: block; width: 99px; height: 36px; }
.logo-name { margin-top: 11px; margin-left: -1px; font: 800 36.700px/38px Lato, "Noto Sans", sans-serif; color: #2a2a2a; letter-spacing: .3px; }
.logo-motto { margin-top: 6px; font: italic 700 21px/24.500px "Liberation Serif", serif; color: #333; }
.site-title { margin-top: 44px; font-size: 53.700px; line-height: 66px; color: #000; }
.strong { font-weight: 700; }

.crumbs { height: 40px; padding: 1px 10px 0 9px; display: flex; justify-content: space-between; align-items: center; font-size: 24.200px; color: #222; }
.crumbs b { color: #333; }
.print { width: 24px; height: 25px; }

.steps { list-style: none; margin: 71px 0 0; padding: 0 0 0 61px; display: flex; gap: 43px; height: 90px; }
.step { width: 257px; height: 90px; flex: none; }
.step svg { display: block; width: 257px; height: 90px; }
.step-label { font: 600 16px "Open Sans", sans-serif; fill: #e6f2ff; text-anchor: middle; }
.step-label.dark { fill: #1a0505; font-weight: 700; }

.heading { margin: 55px 0 0; padding-left: 60px; height: 60px; font: 700 49.600px/60px Lato, sans-serif; color: #4269a2; }
.intro { margin: 30px 0 0; padding-left: 60px; height: 32px; font-size: 24px; line-height: 32px; color: #111; }
.status { margin-top: 3px; height: 32px; padding: 0 60px 0 60px; display: flex; justify-content: space-between; align-items: center; font-size: 21.600px; color: #222; }
.loading { display: flex; align-items: center; }
.bars { display: flex; gap: 4px; margin-right: 15px; }
.bars i { width: 8px; height: 15px; background: #d4d4d4; }
.first-slot {
  display: block; margin: 27px 0 0 60px; width: 252px; height: 36px; padding: 0;
  border: 2px solid #5a0d12; border-top-width: 3px; border-bottom-width: 3px;
  background: linear-gradient(#d7d9dc, #eef0f2 80%, #d8dadd);
  font: 19.200px/28px "Liberation Sans", sans-serif; color: #222;
}
.links { margin-top: 23px; height: 44px; padding-right: 60px; display: flex; justify-content: flex-end; gap: 17px; }
.info { display: flex; align-items: center; gap: 10px; font-size: 24px; color: #003b5e; }
.info svg { width: 41px; height: 44px; flex: none; }
.site-footer {
  margin-top: 17px; height: 180px; padding-top: 39px;
  background: radial-gradient(ellipse 1300px 190px at 50% 0, #efefef 0, #f6f6f6 35%, #fbfbfb 70%, #fff 100%);
  border-top: 1px solid #eeeeee;
}
.footer-inner { height: 120px; margin-right: -1px; border-right: 1px solid #bdbdbd; display: flex; align-items: center; justify-content: center; font-size: 24.100px; color: #222; }

.cookie {
  position: absolute; left: 240px; right: 0; bottom: 0; height: 60px; background: #1d2730;
  padding: 28px 0 0 299px; display: flex; align-items: flex-start; overflow: hidden;
}
.cookie-text { flex: none; width: 1454px; margin-top: 3px; font-size: 26.900px; line-height: 40px; color: #fff; white-space: nowrap; }
.cookie-btn { height: 60px; margin: 0; padding: 0 0 12px; border: 0; border-radius: 9px; background: #fff; color: #000; font: 700 26.800px/40px "Liberation Sans", sans-serif; flex: none; display: block; text-align: center; white-space: nowrap; }
.more { width: 198px; }
.accept { width: 131px; margin-left: 19px; }

/* Menu bar */
.menubar {
  position: absolute; left: 0; top: 0; width: 2880px; height: 45px;
  background: linear-gradient(90deg, #eff1f3, #e7ecf3 300px, #eceef1 1200px, #eef0f3 2000px, #e9edf2);
  border-bottom: 1px solid #8f8f8f; display: flex; justify-content: space-between; align-items: center;
  font: 27px/44px Inter, "Noto Sans", sans-serif; color: #222;
}
.menu-left { display: flex; align-items: center; gap: 38px; padding-left: 42px; }
.menu-left b { font-weight: 700; font-size: 27.800px; margin-left: 3px; }
.apple { width: 26px; height: 30px; margin-top: -2px; }
.menu-right { display: flex; align-items: center; }
.st { display: block; flex: none; }
.dropbox { width: 37px; height: 36px; }
.alert { width: 32px; height: 32px; margin-left: 24px; }
.airplay { width: 36px; height: 36px; margin-left: 28px; }
.wifi { width: 42px; height: 36px; margin-left: 20px; }
.vol { width: 33px; height: 34px; margin-left: 20px; }
.pct { margin-left: 28px; font-size: 24px; }
.batt { width: 47px; height: 26px; margin-left: 8px; }
.clock { width: 304px; height: 44px; margin-left: 15px; background: #2a7fff; color: #fff; text-align: center; font-size: 27.500px; }
.search { width: 30px; height: 34px; margin-left: 22px; }
.list { width: 37px; height: 30px; margin-left: 30px; margin-right: 45px; }
.st-badge { font: 700 16px "Liberation Sans", sans-serif; fill: #fff; text-anchor: middle; }

.popup {
  position: absolute; left: 2144px; top: 44px; width: 572px; height: 216px;
  padding: 7px 0 9px; background: #eceef1; border-radius: 0 0 12px 12px;
  box-shadow: 0 0 1px #777, 0 6px 14px rgba(0,0,0,.3);
  font: 27.200px/38px Inter, "Noto Sans", sans-serif; color: #2a2a2a;
}
.pop-row { height: 38px; padding-left: 42px; position: relative; white-space: nowrap; }
.muted { color: #adadad; }
.pop-sep { height: 4px; margin: 11px 0 9px; background: #dcdee1; }
.check { position: absolute; left: 10px; top: 0; font: 30px/38px "DejaVu Sans", sans-serif; }

/* Dock */
.dock {
  position: absolute; left: 68px; top: 1696px; width: 2743px; height: 104px;
  padding: 13px 0 0 5.500px; border-radius: 10px 10px 0 0; display: flex;
  background: linear-gradient(90deg, #8b7a70 0, #836f68 480px, #a79f9f 700px, #b5afb0 900px, #aca5a4 1050px, #978b80 1250px, #8c8072 1600px, #80775f 2100px, #857c62 100%);
}
.slot { position: relative; width: 86.800px; height: 72px; flex: none; display: flex; justify-content: center; }
.slot svg { display: block; width: 72px; height: 72px; flex: none; overflow: visible; }
.slot.on::after { content: ""; position: absolute; left: 50%; top: 79px; width: 7px; height: 7px; margin-left: -3.500px; border-radius: 50%; background: #0c0c0c; }
.dock-sep { width: 2px; height: 76px; flex: none; margin: 3px 20px 0 20px; background: #5e5644; }
.badge-num { font: 700 19px "Liberation Sans", sans-serif; fill: #fff; text-anchor: middle; }
.cal-m { font: 500 13px "Liberation Sans", sans-serif; fill: #fff; text-anchor: middle; }
.cal-d { font: 400 32px "Liberation Sans", sans-serif; fill: #222; text-anchor: middle; }
.map-3d { font: 700 13px "Liberation Sans", sans-serif; fill: #444; text-anchor: middle; }
.pages-t { font: 700 11px "Liberation Sans", sans-serif; fill: #fff; }
.term { font: 700 17px "Liberation Mono", monospace; fill: #eee; }
.office { font: 700 34px "Liberation Sans Narrow", "Liberation Sans", sans-serif; fill: #e9f3ee; text-anchor: middle; }
.office.small { font-size: 28px; }
.st-red { font: 700 10px "Liberation Sans", sans-serif; fill: #e33; text-anchor: middle; }
.st-blue { font: 400 9px "Liberation Sans", sans-serif; fill: #234; }
.st-note { font: 400 8px "Liberation Sans", sans-serif; fill: #444; }
```
